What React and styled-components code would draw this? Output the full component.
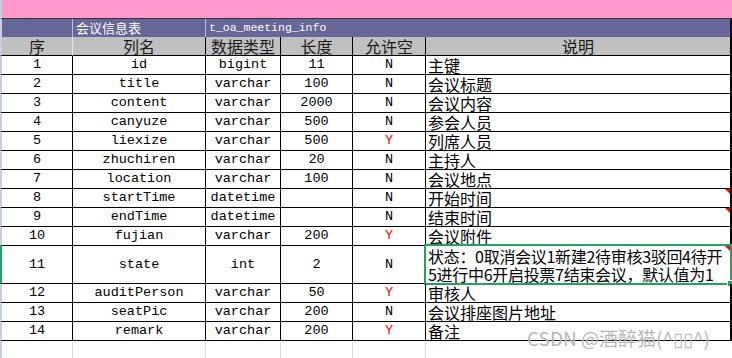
import styled, { createGlobalStyle } from "styled-components";

const cnFont = `"Noto Sans CJK SC", "Noto Sans", sans-serif`;
const monoFont = `"Liberation Mono", "DejaVu Sans Mono", monospace`;
const cols = "73px 133px 75px 72px 73px 306px";

const GlobalStyle = createGlobalStyle`
  html, body { margin: 0; padding: 0; background: #fff; }
`;

const rows = [
  [1, "id", "bigint", "11", "N", "主键"],
  [2, "title", "varchar", "100", "N", "会议标题"],
  [3, "content", "varchar", "2000", "N", "会议内容"],
  [4, "canyuze", "varchar", "500", "N", "参会人员"],
  [5, "liexize", "varchar", "500", "Y", "列席人员"],
  [6, "zhuchiren", "varchar", "20", "N", "主持人"],
  [7, "location", "varchar", "100", "N", "会议地点"],
  [8, "startTime", "datetime", "", "N", "开始时间", true],
  [9, "endTime", "datetime", "", "N", "结束时间", true],
  [10, "fujian", "varchar", "200", "Y", "会议附件"],
  [11, "state", "int", "2", "N", ["状态：0取消会议1新建2待审核3驳回4待开", "5进行中6开启投票7结束会议，默认值为1"], true],
  [12, "auditPerson", "varchar", "50", "Y", "审核人"],
  [13, "seatPic", "varchar", "200", "N", "会议排座图片地址"],
  [14, "remark", "varchar", "200", "Y", "备注"],
];

const Page = styled.div`
  position: relative;
  width: 732px;
  height: 358px;
  overflow: hidden;
  background: #fff;
`;

const PinkBar = styled.div`
  height: 18px;
  background: #ff99cc;
  border-bottom: 1px solid #333;
  border-left: 2px solid #c6cfe0;
`;

const Row = styled.div`
  display: grid;
  grid-template-columns: ${cols};
  grid-template-rows: ${p => p.$h}px;
  height: ${p => p.$h}px;
`;

const TitleRow = styled.div`
  display: grid;
  grid-template-columns: 73px 133px 526px;
  grid-template-rows: 18px;
  height: 18px;
  background: #666699;
`;

const TitleCell = styled.div`
  display: flex;
  align-items: center;
  padding-left: 3px;
  color: #fff;
  font-family: ${p => (p.$mono ? monoFont : cnFont)};
  font-size: ${p => (p.$mono ? "11.5px" : "13px")};
  line-height: 16px;
  border-right: 1px solid #b8b8d8;
  white-space: nowrap;
  &:first-child { border-left: 2px solid #c6cfe0; }
  &:last-child { border-right: 2px solid #111; }
`;

const HeadCell = styled.div`
  display: flex;
  align-items: center;
  justify-content: center;
  background: #c0c0c0;
  color: #1a1a1a;
  font-family: ${cnFont};
  font-size: 16px;
  line-height: 18px;
  border-right: 1px solid #000;
  border-bottom: 1px solid #000;
  &:first-child { border-left: 2px solid #c6cfe0; border-right-color: #e6e6e6; }
  &:last-child { border-right-width: 2px; }
`;

const Cell = styled.div`
  position: relative;
  display: flex;
  align-items: center;
  justify-content: ${p => (p.$left ? "flex-start" : "center")};
  padding-left: ${p => (p.$left ? "2px" : "0")};
  border-right: 1px solid #000;
  border-bottom: 1px solid #000;
  font-family: ${p => (p.$cn ? cnFont : monoFont)};
  font-size: ${p => (p.$cn ? "16px" : "13.5px")};
  line-height: 18px;
  color: ${p => (p.$red ? "#ff0000" : "#000")};
  white-space: nowrap;
  min-height: 0;
  &:first-child { border-left: 2px solid ${p => p.$lead || "#c6cfe0"}; }
  &:last-child { border-right-width: 2px; }
`;

const Lines = styled.div`
  display: flex;
  flex-direction: column;
  letter-spacing: -0.3px;
`;

const BlankCell = styled.div`
  border-right: 1px solid #d4dae6;
  &:first-child { border-left: 2px solid #c6cfe0; }
  &:last-child { border-right: none; }
`;

const Comment = styled.span`
  position: absolute;
  top: 0;
  right: 0;
  width: 0;
  height: 0;
  border-top: 5px solid #ff0000;
  border-left: 5px solid transparent;
`;

const Selection = styled.span`
  position: absolute;
  top: -2px;
  left: -2px;
  right: -2px;
  bottom: -2px;
  border: 2px solid #21a366;
  pointer-events: none;
`;

const Handle = styled.span`
  position: absolute;
  right: -4px;
  bottom: -4px;
  width: 5px;
  height: 5px;
  background: #21a366;
  border: 1px solid #fff;
`;

const Watermark = styled.div`
  position: absolute;
  left: 527px;
  top: 326px;
  font-family: "Noto Sans CJK SC", "Noto Sans", sans-serif;
  font-size: 19px;
  line-height: 24px;
  color: rgba(150, 150, 150, 0.7);
  text-shadow: 0 0 1px rgba(255, 255, 255, 0.9);
  white-space: nowrap;
`;

export default function App() {
  return (
    <Page>
      <GlobalStyle />
      <PinkBar />
      <TitleRow>
        <TitleCell />
        <TitleCell>会议信息表</TitleCell>
        <TitleCell $mono>t_oa_meeting_info</TitleCell>
      </TitleRow>
      <Row $h={19}>
        {["序", "列名", "数据类型", "长度", "允许空", "说明"].map(h => (
          <HeadCell key={h}>{h}</HeadCell>
        ))}
      </Row>
      {rows.map(([no, name, type, len, nul, desc, note]) => {
        const tall = Array.isArray(desc);
        return (
          <Row key={no} $h={tall ? 38 : 19}>
            <Cell $lead={tall ? "#21a366" : undefined}>{no}</Cell>
            <Cell>{name}</Cell>
            <Cell>{type}</Cell>
            <Cell>{len}</Cell>
            <Cell $red={nul === "Y"}>{nul}</Cell>
            <Cell $cn $left>
              {tall ? (
                <Lines>
                  {desc.map(l => <span key={l}>{l}</span>)}
                </Lines>
              ) : (
                desc
              )}
              {note && <Comment />}
              {tall && (
                <Selection>
                  <Handle />
                </Selection>
              )}
            </Cell>
          </Row>
        );
      })}
      <Row $h={18}>
        {[0, 1, 2, 3, 4, 5].map(i => <BlankCell key={i} />)}
      </Row>
      <Watermark>CSDN @酒醉猫(^▯▯^)</Watermark>
    </Page>
  );
}
